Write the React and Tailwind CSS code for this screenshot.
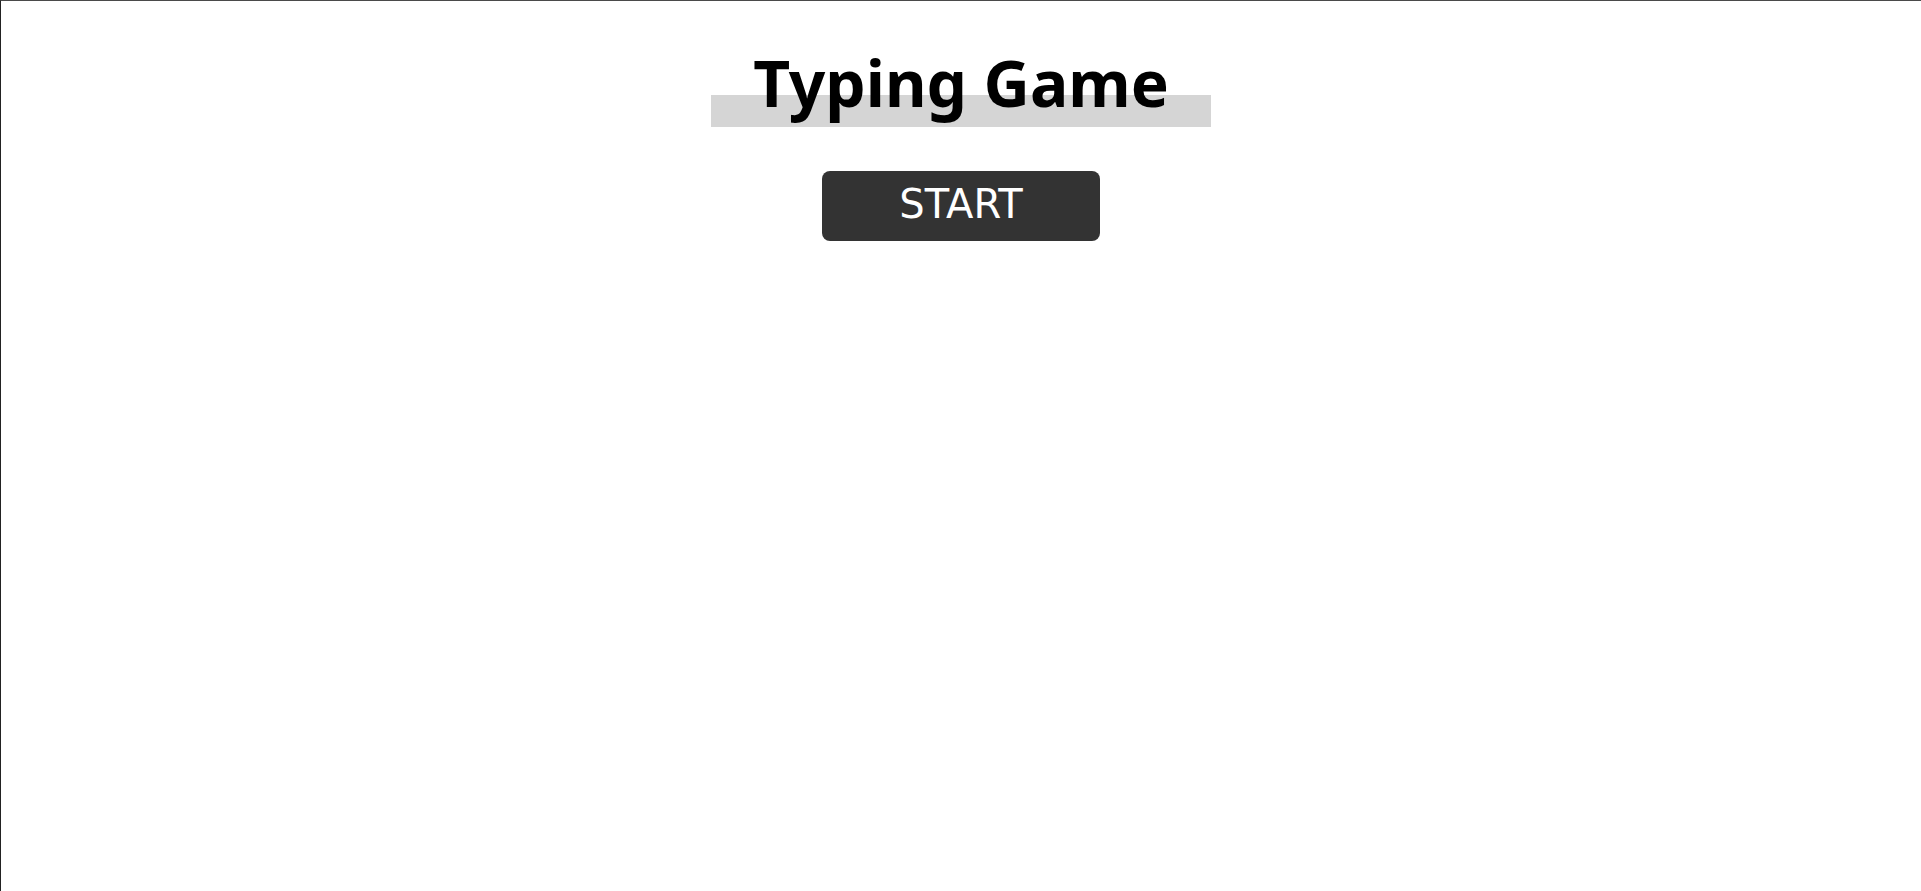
export default function App() {
  return (
    <div
      className="h-[891px] w-full bg-white border-t border-l border-t-[#4a4a4a] border-l-[#222] flex flex-col items-center"
      style={{ fontFamily: '"DejaVu Sans", Verdana, sans-serif' }}
    >
      {/* Title with marker underline */}
      <div className="mt-[42px] w-[500px] h-[84px] flex justify-center bg-[linear-gradient(transparent_62%,#d5d5d5_62%)]">
        <h1 className="text-[64px] leading-[79px] font-bold text-black font-['Noto_Sans',sans-serif]">
          Typing Game
        </h1>
      </div>

      <button className="mt-[44px] w-[278px] h-[70px] rounded-lg bg-[#333333] text-white text-[40px] flex items-center justify-center pb-[5px]">
        START
      </button>
    </div>
  )
}
